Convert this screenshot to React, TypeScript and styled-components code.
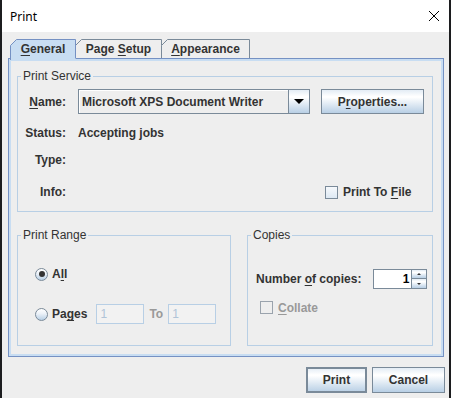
import React from "react";
import styled, { createGlobalStyle, css } from "styled-components";

const Global = createGlobalStyle`
  html, body { margin: 0; padding: 0; background: #1c1d1f; }
  body { width: 451px; height: 398px; overflow: hidden; }
  #root { width: 451px; height: 398px; }
  * { box-sizing: border-box; }
`;

const TEXT = "#333333";
const EDGE = "#7a8a99";
const BLUE_EDGE = "#7591c3";
const LIGHT_BLUE = "#c8ddf2";
const GROUP_EDGE = "#b8cfe5";
const FONT = `"Liberation Sans", Arial, sans-serif`;
const GRADIENT = "linear-gradient(to bottom, #e3ecf5 0%, #ffffff 28%, #ffffff 32%, #b8cfe5 100%)";

const Desktop = styled.div`
  width: 451px;
  height: 398px;
  padding-left: 2px;
  background: #1c1d1f;
  display: flex;
`;

const Window = styled.div`
  width: 447px;
  height: 398px;
  display: flex;
  flex-direction: column;
  background: #eeeeee;
`;

const TitleBar = styled.div`
  height: 32px;
  flex: none;
  background: #ffffff;
  display: flex;
  align-items: center;
  justify-content: space-between;
  padding: 0 10px 0 8px;
  font-family: "Noto Sans", "Open Sans", sans-serif;
  font-size: 12px;
  color: #000;
`;

const Body = styled.div`
  flex: 1;
  display: flex;
  flex-direction: column;
  padding: 7px 5px 0 6px;
  font-family: ${FONT};
  font-size: 12px;
  color: ${TEXT};
`;

const TabStrip = styled.div`
  display: flex;
  align-items: flex-start;
  height: 19px;
  flex: none;
  padding-left: 2px;
  position: relative;
  z-index: 2;
`;

const TabItem = styled.div<{ $w: number; $selected?: boolean; $first?: boolean }>`
  position: relative;
  width: ${(p) => p.$w}px;
  height: ${(p) => (p.$selected ? 21 : 19)}px;
  margin-left: ${(p) => (p.$first ? 0 : -1)}px;
  z-index: ${(p) => (p.$selected ? 2 : 1)};
  display: flex;
  justify-content: center;
  font-weight: bold;
  font-size: 12px;
  line-height: 19px;
  color: ${TEXT};
`;

const TabShape = styled.svg`
  position: absolute;
  left: 0;
  top: 0;
  overflow: visible;
`;

const TabText = styled.span`
  position: relative;
  padding-top: 1px;
`;

const Panel = styled.div`
  position: relative;
  z-index: 1;
  flex: none;
  border: 1px solid ${BLUE_EDGE};
  box-shadow: inset 0 0 0 2px ${LIGHT_BLUE};
  padding: 17px 10px 10px 8px;
  display: flex;
  flex-direction: column;
`;

const Group = styled.div<{ $w?: number; $h: number; $grow?: boolean }>`
  position: relative;
  border: 1px solid ${GROUP_EDGE};
  height: ${(p) => p.$h}px;
  flex: ${(p) => (p.$grow ? "1 1 0" : "none")};
  ${(p) => (p.$w ? `width: ${p.$w}px;` : "")}
  display: flex;
  flex-direction: column;
`;

const GroupTitle = styled.span`
  position: absolute;
  top: -8px;
  left: 3px;
  padding: 0 2px;
  background: #eeeeee;
  line-height: 14px;
  font-weight: normal;
  color: ${TEXT};
`;

const Row = styled.div<{ $h: number; $mt: number; $pl?: number }>`
  display: flex;
  align-items: center;
  height: ${(p) => p.$h}px;
  margin-top: ${(p) => p.$mt}px;
  padding-left: ${(p) => p.$pl ?? 0}px;
  flex: none;
`;

const BottomGroups = styled.div`
  display: flex;
  gap: 16px;
  margin-top: 23px;
  flex: none;
`;

const Text = styled.span<{ $disabled?: boolean; $ml?: number; $mr?: number }>`
  font-weight: bold;
  color: ${(p) => (p.$disabled ? "#999999" : TEXT)};
  margin-left: ${(p) => p.$ml ?? 0}px;
  margin-right: ${(p) => p.$mr ?? 0}px;
  white-space: nowrap;
  line-height: 14px;
`;

const FieldLabel = styled(Text)`
  width: 48px;
  margin-right: 12px;
  text-align: right;
  flex: none;
`;

const Mn = styled.u`
  text-decoration: underline;
  text-decoration-thickness: 1px;
  text-underline-offset: 2px;
  text-decoration-skip-ink: none;
`;

const Combo = styled.div`
  width: 232px;
  height: 25px;
  border: 1px solid ${EDGE};
  display: flex;
  flex: none;
  background: #eeeeee;
  box-shadow: inset 1px 1px 0 #ffffff;
`;

const ComboText = styled.span`
  flex: 1;
  display: flex;
  align-items: center;
  padding-left: 3px;
  font-weight: bold;
  white-space: nowrap;
  overflow: hidden;
`;

const ComboArrow = styled.span`
  width: 21px;
  flex: none;
  border-left: 1px solid ${EDGE};
  background: ${GRADIENT};
  display: flex;
  align-items: center;
  justify-content: center;
  &::after {
    content: "";
    width: 0;
    height: 0;
    border-left: 5px solid transparent;
    border-right: 5px solid transparent;
    border-top: 5px solid #000;
  }
`;

const PushButton = styled.button<{ $w: number; $h: number; $ml?: number; $default?: boolean }>`
  width: ${(p) => p.$w}px;
  height: ${(p) => p.$h}px;
  margin: 0 0 0 ${(p) => p.$ml ?? 0}px;
  flex: none;
  padding: 0;
  border: 1px solid ${EDGE};
  ${(p) =>
    p.$default &&
    css`
      box-shadow: inset 0 0 0 1px ${EDGE};
    `}
  background: ${GRADIENT};
  font-family: ${FONT};
  font-size: 12px;
  font-weight: bold;
  color: ${TEXT};
  display: flex;
  align-items: center;
  justify-content: center;
`;

const Spacer = styled.span<{ $w: number }>`
  width: ${(p) => p.$w}px;
  flex: none;
`;

const CheckBox = styled.span<{ $disabled?: boolean; $ml?: number }>`
  width: 13px;
  height: 13px;
  flex: none;
  margin-left: ${(p) => p.$ml ?? 0}px;
  margin-right: 5px;
  border: 1px solid ${(p) => (p.$disabled ? "#9aa3ad" : EDGE)};
  background: ${(p) => (p.$disabled ? "#eeeeee" : "linear-gradient(to bottom, #f6f9fc, #dde8f3)")};
`;

const Radio = styled.span<{ $checked?: boolean }>`
  width: 13px;
  height: 13px;
  flex: none;
  margin-right: 4px;
  border-radius: 50%;
  border: 1px solid ${EDGE};
  background: linear-gradient(to bottom, #ffffff 0%, #eef3f9 40%, #b8cfe5 100%);
  display: flex;
  align-items: center;
  justify-content: center;
  ${(p) =>
    p.$checked &&
    css`
      &::after {
        content: "";
        width: 6px;
        height: 6px;
        border-radius: 50%;
        background: #333333;
      }
    `}
`;

const TextField = styled.span<{ $ml?: number }>`
  width: 48px;
  height: 20px;
  flex: none;
  margin-left: ${(p) => p.$ml ?? 0}px;
  border: 1px solid ${GROUP_EDGE};
  background: #f2f2f2;
  color: #b0c4d8;
  padding-left: 3px;
  display: flex;
  align-items: center;
  font-weight: normal;
`;

const Spinner = styled.div`
  display: flex;
  height: 20px;
  margin-left: 12px;
  flex: none;
`;

const SpinField = styled.span`
  width: 38px;
  height: 20px;
  border: 1px solid ${EDGE};
  border-right: none;
  background: #ffffff;
  display: flex;
  align-items: center;
  justify-content: flex-end;
  padding-right: 2px;
  font-weight: bold;
  color: #000;
`;

const SpinButtons = styled.div`
  width: 16px;
  display: flex;
  flex-direction: column;
`;

const SpinButton = styled.span<{ $up?: boolean }>`
  height: 10px;
  border: 1px solid ${EDGE};
  ${(p) => (p.$up ? "" : "border-top: none;")}
  background: ${GRADIENT};
  display: flex;
  align-items: center;
  justify-content: center;
  &::after {
    content: "";
    width: 0;
    height: 0;
    border-left: 2px solid transparent;
    border-right: 2px solid transparent;
    ${(p) => (p.$up ? "border-bottom: 2px solid #333;" : "border-top: 2px solid #333;")}
  }
`;

const ButtonBar = styled.div`
  display: flex;
  justify-content: flex-end;
  gap: 5px;
  margin-top: 10px;
  margin-right: -1px;
  flex: none;
`;

function Tab({ w, label, selected, first }: { w: number; label: React.ReactNode; selected?: boolean; first?: boolean }) {
  const h = selected ? 21 : 19;
  const path = selected
    ? `M0.5,${h} L0.5,6.5 L6.5,0.5 L${w - 0.5},0.5 L${w - 0.5},${h - 2}`
    : `M0.5,${h} L0.5,6.5 L6.5,0.5 L${w - 0.5},0.5 L${w - 0.5},${h}`;
  return (
    <TabItem $w={w} $selected={selected} $first={first}>
      <TabShape width={w} height={h}>
        <path
          d={`M0.5,${h} L0.5,6.5 L6.5,0.5 L${w - 0.5},0.5 L${w - 0.5},${h} Z`}
          fill={selected ? LIGHT_BLUE : "#eeeeee"}
          stroke="none"
        />
        <path d={path} fill="none" stroke={selected ? BLUE_EDGE : EDGE} strokeWidth={1} />
      </TabShape>
      <TabText>{label}</TabText>
    </TabItem>
  );
}

export default function App() {
  return (
    <>
      <Global />
      <Desktop>
        <Window>
          <TitleBar>
            <span>Print</span>
            <svg width="10" height="10" viewBox="0 0 10 10">
              <path d="M0,0 L10,10 M10,0 L0,10" stroke="#000" strokeWidth="1" />
            </svg>
          </TitleBar>
          <Body>
            <TabStrip>
              <Tab w={66} first selected label={<><Mn>G</Mn>eneral</>} />
              <Tab w={87} label={<>Page <Mn>S</Mn>etup</>} />
              <Tab w={89} label={<><Mn>A</Mn>ppearance</>} />
            </TabStrip>
            <Panel>
              <Group $h={136}>
                <GroupTitle>Print Service</GroupTitle>
                <Row $h={25} $mt={12}>
                  <FieldLabel>
                    <Mn>N</Mn>ame:
                  </FieldLabel>
                  <Combo>
                    <ComboText>Microsoft XPS Document Writer</ComboText>
                    <ComboArrow />
                  </Combo>
                  <PushButton $w={103} $h={25} $ml={11}>
                    P<Mn>r</Mn>operties...
                  </PushButton>
                </Row>
                <Row $h={14} $mt={12}>
                  <FieldLabel>Status:</FieldLabel>
                  <Text>Accepting jobs</Text>
                </Row>
                <Row $h={14} $mt={13}>
                  <FieldLabel>Type:</FieldLabel>
                </Row>
                <Row $h={14} $mt={18}>
                  <FieldLabel>Info:</FieldLabel>
                  <Spacer $w={243} />
                  <CheckBox $ml={4} />
                  <Text>
                    Print To <Mn>F</Mn>ile
                  </Text>
                </Row>
              </Group>
              <BottomGroups>
                <Group $w={214} $h={111}>
                  <GroupTitle>Print Range</GroupTitle>
                  <Row $h={20} $mt={28} $pl={17}>
                    <Radio $checked />
                    <Text>
                      A<Mn>l</Mn>l
                    </Text>
                  </Row>
                  <Row $h={20} $mt={20} $pl={17}>
                    <Radio />
                    <Text>
                      Pa<Mn>g</Mn>es
                    </Text>
                    <TextField $ml={9}>1</TextField>
                    <Text $disabled $ml={5} $mr={5}>
                      To
                    </Text>
                    <TextField>1</TextField>
                  </Row>
                </Group>
                <Group $h={111} $grow>
                  <GroupTitle>Copies</GroupTitle>
                  <Row $h={20} $mt={33} $pl={8}>
                    <Text>
                      Number <Mn>o</Mn>f copies:
                    </Text>
                    <Spinner>
                      <SpinField>1</SpinField>
                      <SpinButtons>
                        <SpinButton $up />
                        <SpinButton />
                      </SpinButtons>
                    </Spinner>
                  </Row>
                  <Row $h={13} $mt={12} $pl={12}>
                    <CheckBox $disabled />
                    <Text $disabled>
                      <Mn>C</Mn>ollate
                    </Text>
                  </Row>
                </Group>
              </BottomGroups>
            </Panel>
            <ButtonBar>
              <PushButton $w={61} $h={26} $default>
                Print
              </PushButton>
              <PushButton $w={73} $h={26}>
                Cancel
              </PushButton>
            </ButtonBar>
          </Body>
        </Window>
      </Desktop>
    </>
  );
}
